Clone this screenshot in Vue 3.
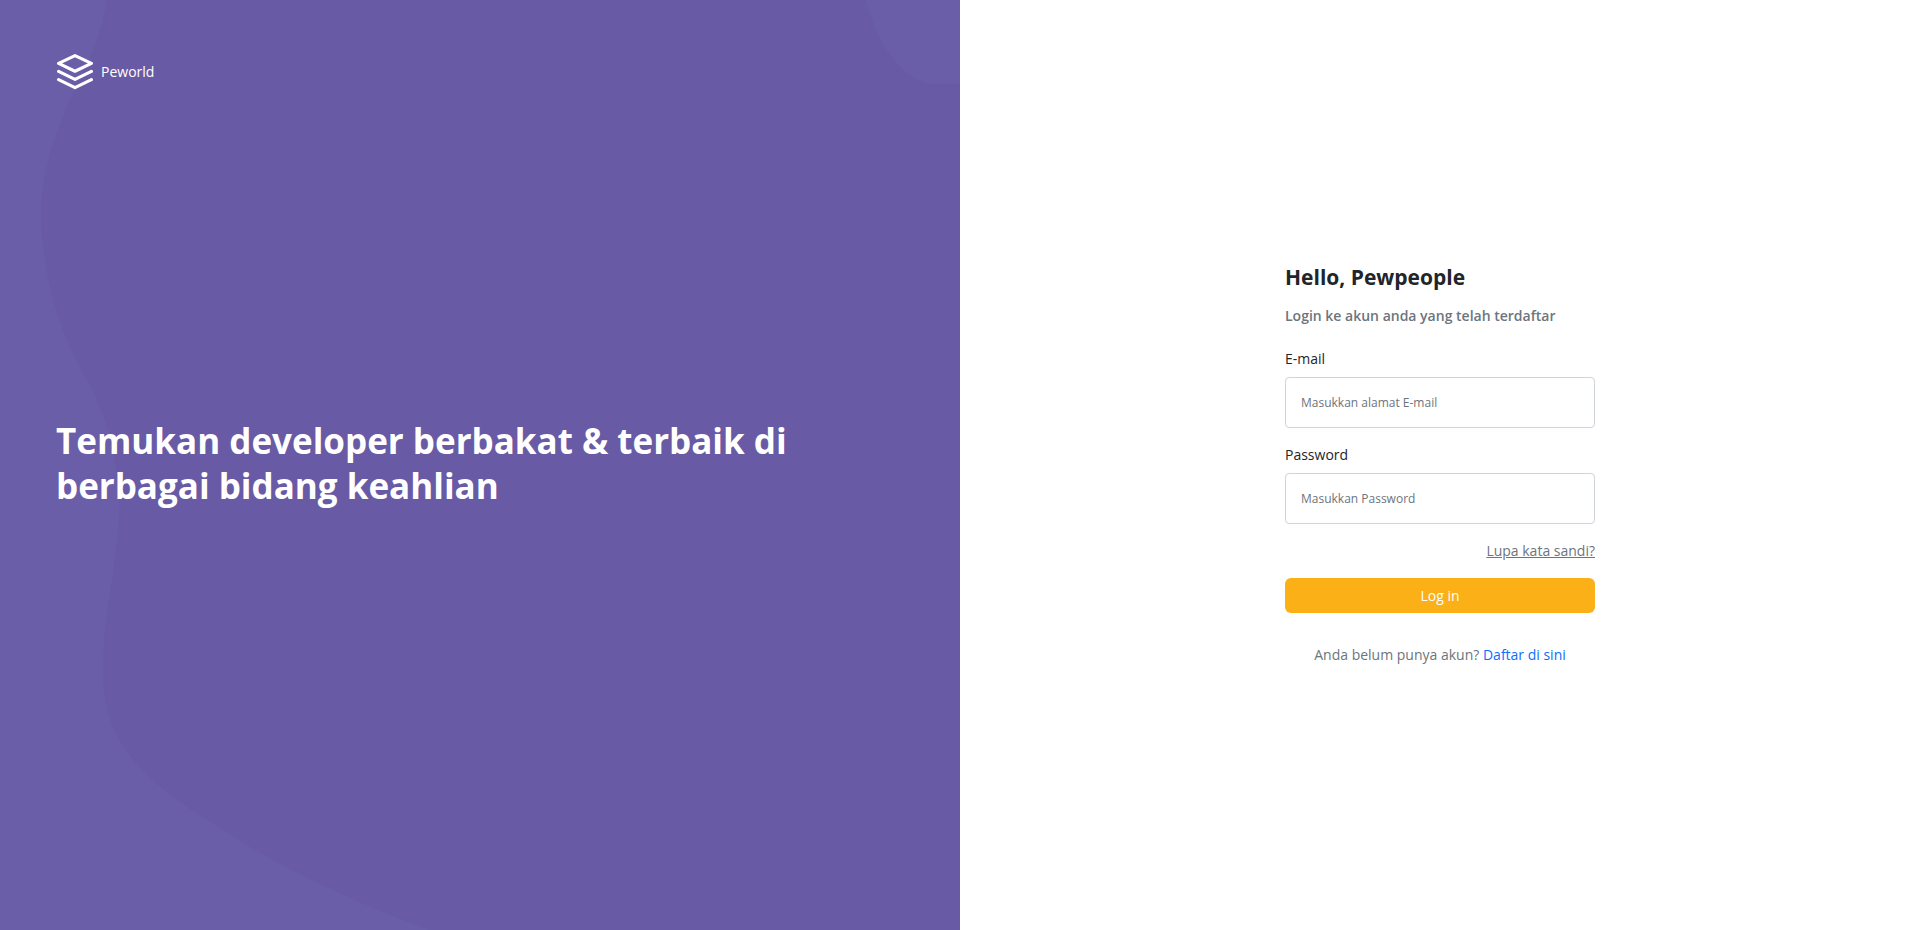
<script setup>
import { ref } from 'vue'

const email = ref('')
const password = ref('')
</script>

<template>
  <main class="page">
    <section class="hero">
      <svg class="hero-shapes" viewBox="0 0 960 930" preserveAspectRatio="none" aria-hidden="true">
        <path d="M0 0H107C102 30 90 62 73 93C52 140 41 175 41 217C43 285 62 335 84 375C108 415 119 460 119 512C117 570 103 610 103 675C103 745 150 785 215 825C280 868 350 900 429 930H0Z" />
        <path d="M866 0C872 24 882 46 894 60C908 76 920 84 936 84H960V0Z" />
      </svg>
      <header class="brand">
        <svg class="brand-icon" viewBox="0 0 37 36" aria-hidden="true">
          <path d="M19 1.6L35.4 9.4L19 17.2L2.6 9.4Z" />
          <path d="M2.6 17.4L19 25.4L35.4 17.4" />
          <path d="M2.6 25.6L19 33.6L35.4 25.6" />
        </svg>
        <span>Peworld</span>
      </header>
      <h1 class="headline">Temukan developer berbakat &amp; terbaik di berbagai bidang keahlian</h1>
    </section>

    <section class="login">
      <form class="card" @submit.prevent>
        <h2 class="title">Hello, Pewpeople</h2>
        <p class="subtitle">Login ke akun anda yang telah terdaftar</p>
        <div class="field">
          <label for="email">E-mail</label>
          <input id="email" v-model="email" type="email" placeholder="Masukkan alamat E-mail" />
        </div>
        <div class="field">
          <label for="password">Password</label>
          <input id="password" v-model="password" type="password" placeholder="Masukkan Password" />
        </div>
        <a class="forgot" href="#">Lupa kata sandi?</a>
        <button class="submit" type="submit">Log in</button>
        <p class="signup">Anda belum punya akun? <a href="#">Daftar di sini</a></p>
      </form>
    </section>
  </main>
</template>

<style>
body {
  margin: 0;
}
</style>

<style scoped>
.page {
  display: grid;
  grid-template-columns: 1fr 1fr;
  min-height: 100vh;
  background: #fff;
  color: #212529;
  font-family: "Segoe UI", "Open Sans", "Noto Sans", sans-serif;
  font-size: 14px;
  line-height: 24px;
}

.hero {
  position: relative;
  display: grid;
  grid-template-rows: 1fr auto 1fr;
  padding: 0 56px 4px;
  background: #695aa6;
  color: #fff;
}

.hero-shapes {
  position: absolute;
  inset: 0;
  width: 100%;
  height: 100%;
  fill: #6a5ea9;
}

.brand {
  position: relative;
  display: flex;
  align-items: center;
  align-self: start;
  gap: 8px;
  padding-top: 54px;
}

.brand-icon {
  width: 37px;
  height: 36px;
  fill: none;
  stroke: #fff;
  stroke-width: 3.2;
  stroke-linecap: round;
  stroke-linejoin: round;
}

.headline {
  position: relative;
  margin: 0;
  font-size: 35px;
  font-weight: 700;
  line-height: 45px;
}

.login {
  display: flex;
  align-items: center;
  justify-content: center;
  padding: 24px 24px 25px;
}

.card {
  display: flex;
  flex-direction: column;
  width: 100%;
  max-width: 310px;
}

.title {
  margin: 0 0 12px;
  font-size: 21px;
  font-weight: 700;
  line-height: 30px;
}

.subtitle {
  margin: 0 0 19px;
  color: #6c757d;
  font-weight: 600;
}

.field {
  display: flex;
  flex-direction: column;
  gap: 6px;
  margin-bottom: 15px;
}

.field input {
  box-sizing: border-box;
  width: 100%;
  height: 51px;
  padding: 0 15px;
  border: 1px solid #ced4da;
  border-radius: 4px;
  background: #fff;
  color: #212529;
  font-family: inherit;
  font-size: 12px;
}

.field input::placeholder {
  color: #6c757d;
  opacity: 1;
}

.forgot {
  align-self: flex-end;
  margin-bottom: 15px;
  color: #6c757d;
}

.submit {
  height: 35px;
  padding: 0;
  border: 0;
  border-radius: 6px;
  background: #fbb017;
  color: #fff;
  font-family: inherit;
  font-size: 14px;
}

.signup {
  margin: 30px 0 0;
  color: #6c757d;
  text-align: center;
}

.signup a {
  color: #0d6efd;
  text-decoration: none;
}
</style>
